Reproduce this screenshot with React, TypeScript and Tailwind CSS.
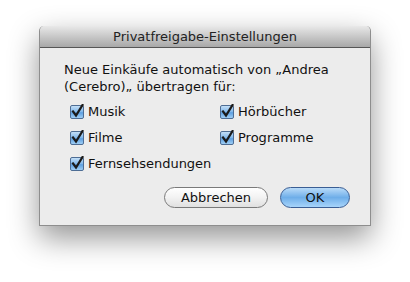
import React from "react";

function Check() {
  return (
    <svg width="15" height="15" viewBox="0 0 15 15" className="shrink-0">
      <defs>
        <linearGradient id="cb" x1="0" y1="0" x2="0" y2="1">
          <stop offset="0" stopColor="#c9e2f8" />
          <stop offset="0.5" stopColor="#7fb6ea" />
          <stop offset="0.55" stopColor="#5d9fe0" />
          <stop offset="1" stopColor="#a6d3f7" />
        </linearGradient>
      </defs>
      <rect x="0.5" y="1.5" width="13" height="13" rx="1.5" fill="url(#cb)" stroke="#4e6d94" />
      <path d="M3 7.5 L6 11.5 L12.5 1" fill="none" stroke="#1b1b1b" strokeWidth="2.2" strokeLinecap="square" />
    </svg>
  );
}

function Item({ label }: { label: string }) {
  return (
    <div className="flex items-center gap-[3px]">
      <Check />
      <span>{label}</span>
    </div>
  );
}

export default function App() {
  return (
    <div
      className="w-[410px] h-[282px] bg-white pl-[39px] pt-[26px] text-[13px] text-[#111]"
      style={{ fontFamily: '"DejaVu Sans", "Lucida Grande", sans-serif' }}
    >
      <div className="w-[332px] h-[200px] flex flex-col bg-[#ececec] border-x border-b border-[#8e8e8e] rounded-t-[5px] shadow-[0_12px_30px_rgba(0,0,0,0.42)]">
        <div className="h-[22px] flex items-center justify-center rounded-t-[5px] bg-gradient-to-b from-[#e9e9e9] to-[#a8a8a8] border-b border-[#565656] text-[#222]">
          Privatfreigabe-Einstellungen
        </div>
        <div className="pl-[24px] pt-[13px] leading-[17px]">
          <p>Neue Einkäufe automatisch von „Andrea</p>
          <p>(Cerebro)„ übertragen für:</p>
          <div className="grid grid-cols-[150px_1fr] gap-y-[9px] pl-[6px] pt-[8px]">
            <Item label="Musik" />
            <Item label="Hörbücher" />
            <Item label="Filme" />
            <Item label="Programme" />
            <Item label="Fernsehsendungen" />
          </div>
          <div className="flex justify-end gap-[12px] pr-[20px] pt-[15px]">
            <button className="w-[104px] h-[21px] rounded-full border border-[#7a7a7a] bg-gradient-to-b from-white via-[#f2f2f2] to-[#e0e0e0] leading-none">
              Abbrechen
            </button>
            <button className="w-[70px] h-[21px] rounded-full border border-[#3a5e94] bg-gradient-to-b from-[#b9dbf8] via-[#6eaee9] to-[#a7d4fa] leading-none">
              OK
            </button>
          </div>
        </div>
      </div>
    </div>
  );
}
